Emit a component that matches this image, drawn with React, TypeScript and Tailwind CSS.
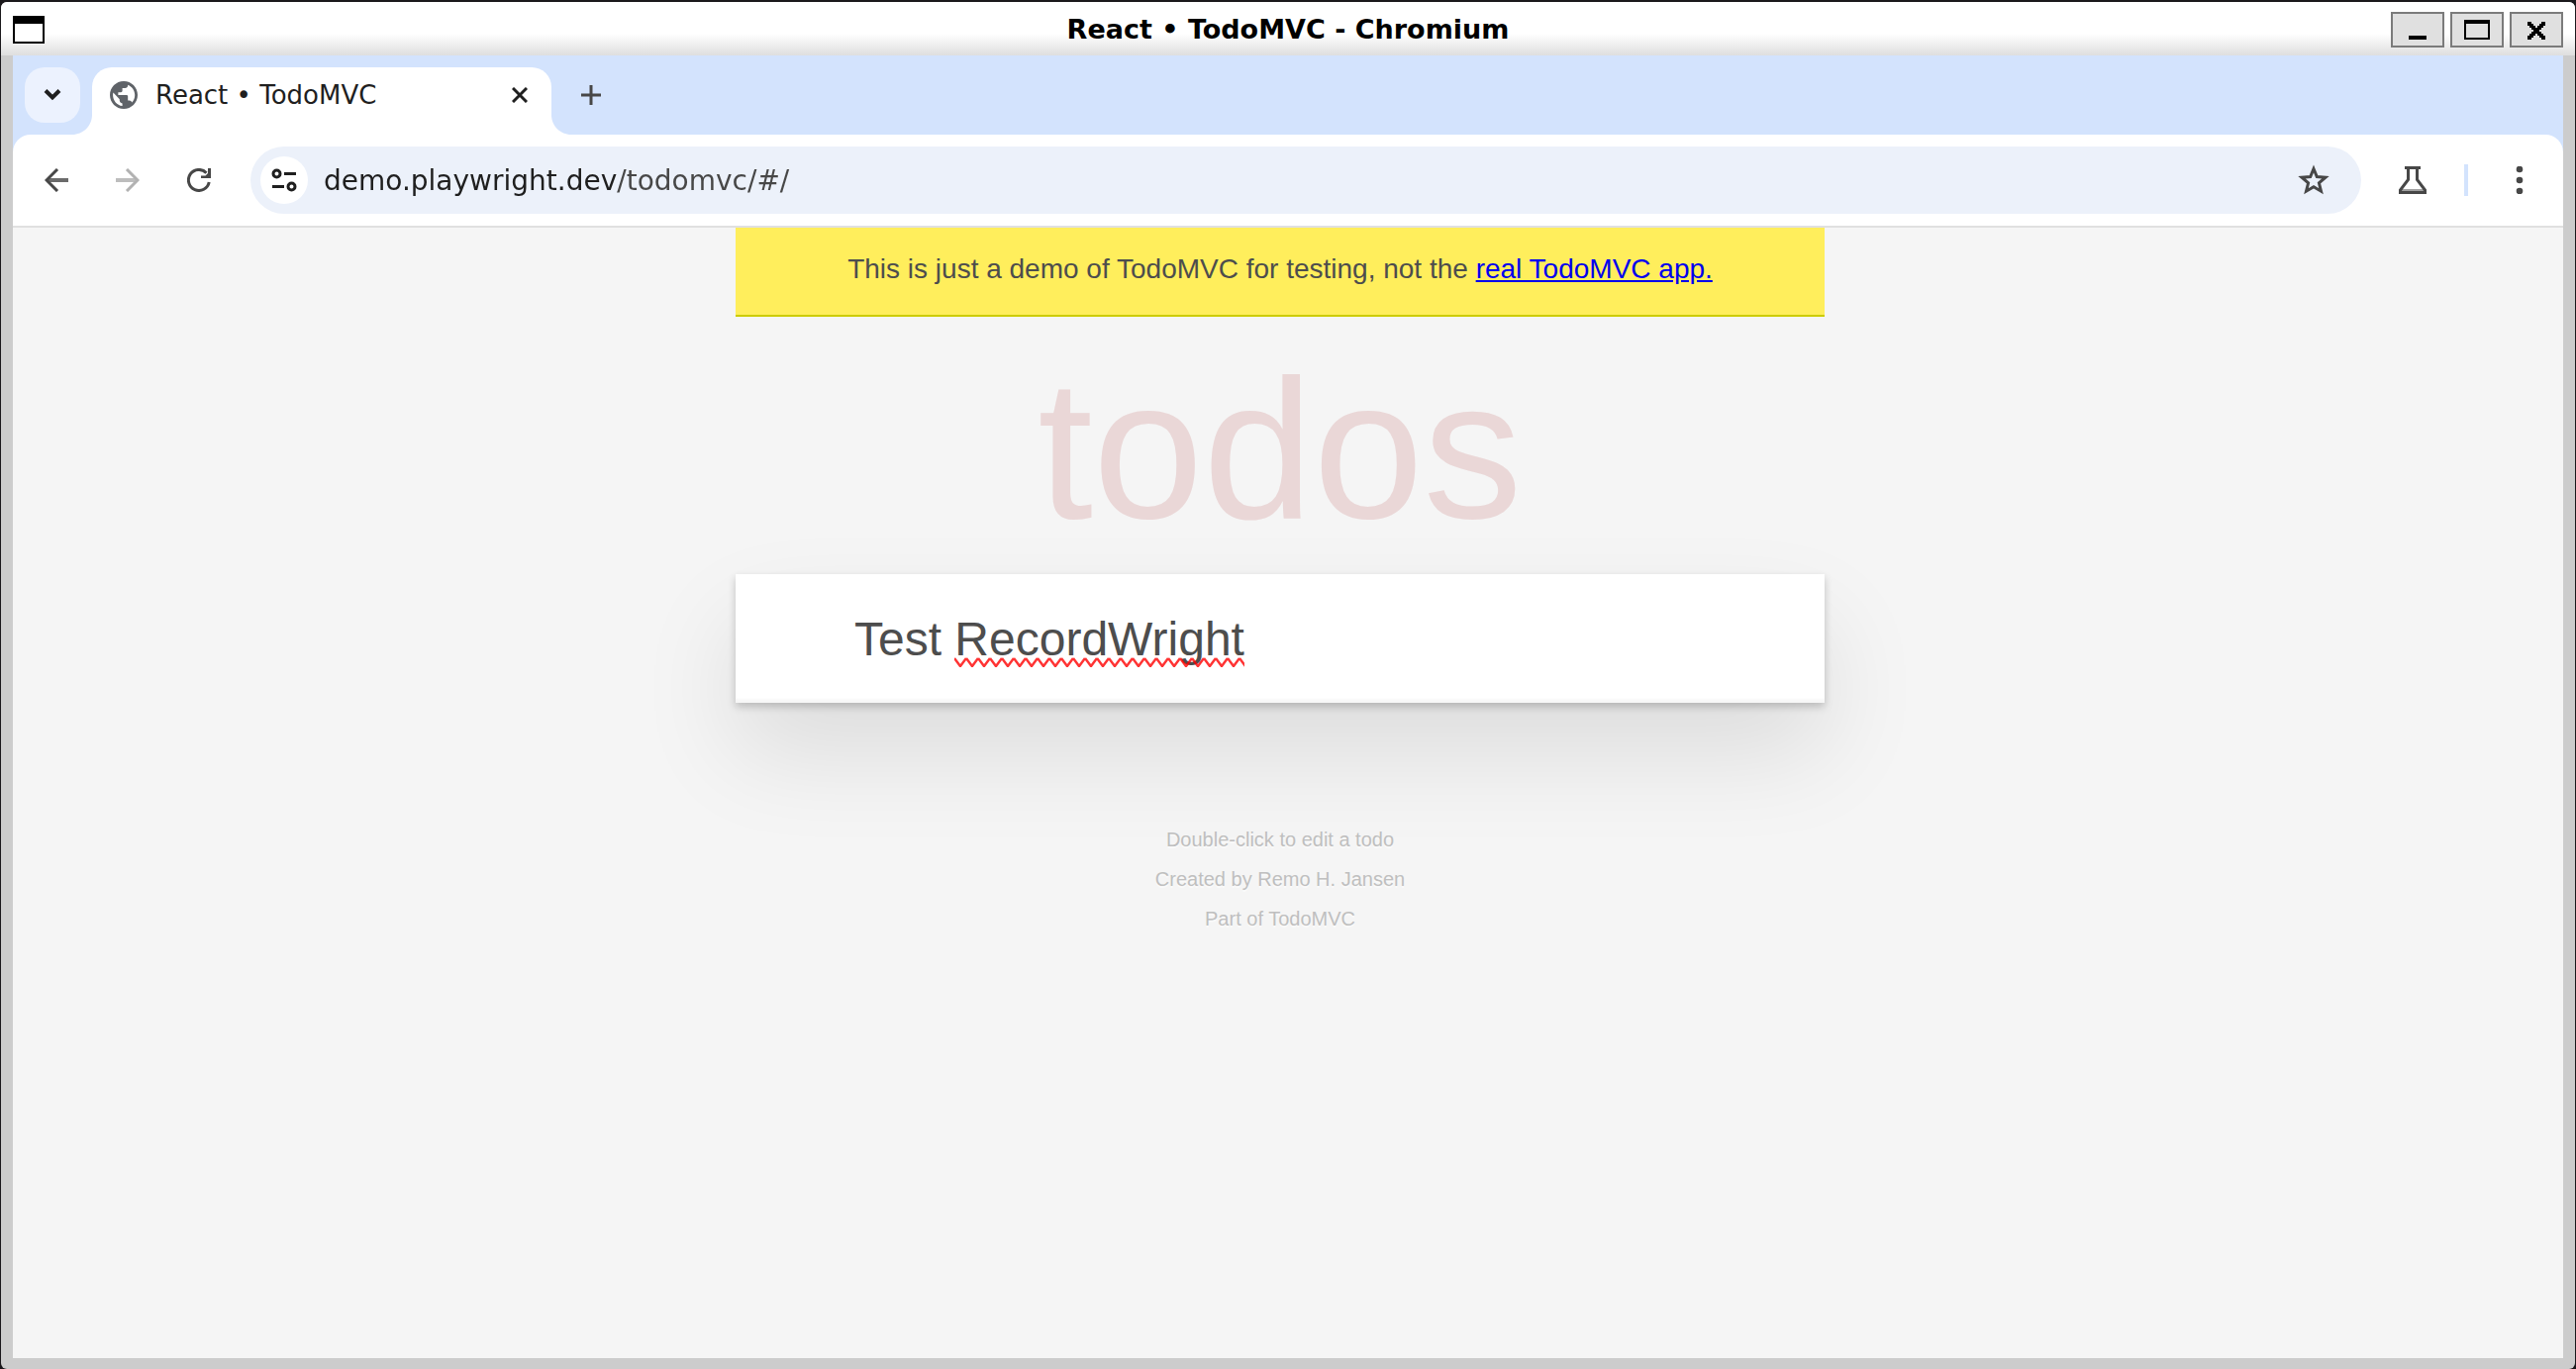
import React from "react";

function TitleBar() {
  return (
    <header className="flex h-[54px] items-center bg-linear-to-b from-white from-60% to-[#dedede] px-3 pt-0.5">
      <div className="flex flex-1">
        <button
          aria-label="Window menu"
          className="h-7 w-8 border-2 border-t-8 border-black bg-white"
        />
      </div>
      <h1 className="font-['DejaVu_Sans',sans-serif] text-[27px] leading-[52px] font-bold text-black">
        React • TodoMVC - Chromium
      </h1>
      <div className="flex flex-1 justify-end gap-1.5">
        <WindowButton label="Minimize">
          <path d="M16 22h18v4H16z" />
        </WindowButton>
        <WindowButton label="Maximize">
          <path fillRule="evenodd" d="M12 6h26v20H12zM14 10v14h22V10z" />
        </WindowButton>
        <WindowButton label="Close">
          <path d="M16 8h4v2h2v2h2v2h2v-2h2v-2h2V8h4v4h-2v2h-2v2h-2v2h2v2h2v2h2v4h-4v-2h-2v-2h-2v-2h-2v2h-2v2h-2v2h-4v-4h2v-2h2v-2h2v-2h-2v-2h-2v-2h-2z" />
        </WindowButton>
      </div>
    </header>
  );
}

function WindowButton({ label, children }: { label: string; children: React.ReactNode }) {
  return (
    <button aria-label={label} className="h-9 w-[54px] border-2 border-[#7b7b7b] bg-[#e0e0e0]">
      <svg viewBox="0 0 50 32" className="h-8 w-[50px]">
        {children}
      </svg>
    </button>
  );
}

function TabStrip() {
  return (
    <div className="flex h-20 items-end bg-[#d3e3fd]">
      <button
        aria-label="Search tabs"
        className="mb-3 ml-3 flex size-14 items-center justify-center rounded-[20px] bg-[#ecf2fe]"
      >
        <svg viewBox="0 0 20 20" className="size-5" fill="none" stroke="#1f1f1f" strokeWidth="4">
          <path d="M3 5.500 10 12.500 17 5.500" />
        </svg>
      </button>
      {/* The foot curves out of the tab and slips under the rounded search button. */}
      <svg viewBox="0 0 20 20" className="-ml-2 size-5" fill="#fff">
        <path d="M20 0v20H0C11 20 20 11 20 0z" />
      </svg>
      <div className="flex h-[68px] w-[464px] items-center rounded-t-[20px] bg-white pr-6 pl-[18px]">
        <svg viewBox="2 2 20 20" className="mb-3 size-7 shrink-0" fill="#5f6368">
          <path d="M12 2C6.480 2 2 6.480 2 12s4.480 10 10 10 10-4.480 10-10S17.520 2 12 2zM4.200 12c0-.610.080-1.210.210-1.780L8.990 15v1c0 1.100.900 2 2 2v1.930C7.060 19.430 4.200 16.070 4.200 12zm13.690 5.400c-.260-.810-1-1.400-1.900-1.400h-1v-3c0-.550-.450-1-1-1h-6v-2h2c.550 0 1-.450 1-1V7h2c1.100 0 2-.900 2-2v-.410C17.920 5.770 20 8.650 20 12c0 2.080-.810 3.980-2.110 5.400z" />
        </svg>
        <span className="mb-3 ml-[18px] flex-1 font-['DejaVu_Sans',sans-serif] text-[26px] leading-8 whitespace-nowrap text-[#1f1f1f]">
          React • TodoMVC
        </span>
        <button aria-label="Close tab" className="mb-3">
          <svg viewBox="0 0 16 16" className="size-4" fill="none" stroke="#1f1f1f" strokeWidth="3">
            <path d="M1 1l14 14M15 1 1 15" />
          </svg>
        </button>
      </div>
      <svg viewBox="0 0 20 20" className="size-5" fill="#fff">
        <path d="M0 0v20h20C9 20 0 11 0 0z" />
      </svg>
      <button aria-label="New tab" className="mb-[30px] ml-2.5">
        <svg viewBox="0 0 20 20" className="size-5" fill="none" stroke="#474747" strokeWidth="3">
          <path d="M10 0v20M0 10h20" />
        </svg>
      </button>
    </div>
  );
}

function Toolbar() {
  return (
    <div className="bg-[#d3e3fd]">
      <div className="flex h-[94px] items-center rounded-t-[18px] border-b-2 border-[#e0e0e0] bg-white pr-10 pl-8">
        <button aria-label="Back">
          <svg viewBox="0 0 24 24" className="size-6" fill="none" strokeWidth="3">
            <path d="M24 12H3" stroke="#6b6b6b" strokeWidth="4" />
            <path d="M13 1 2 12l11 11" stroke="#474747" />
          </svg>
        </button>
        <button aria-label="Forward" className="ml-12">
          <svg viewBox="0 0 24 24" className="size-6" fill="none" strokeWidth="3">
            <path d="M0 12h21" stroke="#bdbdbd" strokeWidth="4" />
            <path d="M11 1l11 11-11 11" stroke="#b2b2b2" />
          </svg>
        </button>
        <button aria-label="Reload" className="ml-12">
          <svg viewBox="0 0 24 24" className="size-6" fill="none" stroke="#474747" strokeWidth="3">
            <path d="M22.200 14A10.500 10.500 0 1 1 19.500 4.700" />
            <path d="M24 0v10H14V7.500h4.500L21 5V0z" fill="#474747" stroke="none" />
          </svg>
        </button>
        <div className="ml-10 flex h-[68px] flex-1 items-center rounded-full bg-[#ecf1fa] pr-8 pl-2.5">
          <button
            aria-label="View site information"
            className="flex size-12 items-center justify-center rounded-full bg-white"
          >
            <svg viewBox="0 0 26 28" className="h-7 w-[26px]" fill="none" stroke="#1f1f1f" strokeWidth="3">
              <circle cx="5.500" cy="7.500" r="3.500" />
              <path d="M13 7.500h12M1 20.500h12" />
              <circle cx="20.500" cy="20.500" r="3.500" />
            </svg>
          </button>
          <input
            aria-label="Address"
            defaultValue="demo.playwright.dev/todomvc/#/"
            spellCheck={false}
            className="ml-4 h-12 min-w-0 flex-1 bg-linear-to-r from-[#1f1f1f] from-[297px] to-[#474747] to-[297px] bg-clip-text font-['DejaVu_Sans',sans-serif] text-[28px] text-transparent outline-none"
          />
          <button aria-label="Bookmark this tab">
            <svg viewBox="0 0 32 32" className="size-8" fill="none" stroke="#474747" strokeWidth="3">
              <path d="M16 4.500l3.300 8 8.700.700-6.600 5.600 2.100 8.400-7.500-4.500-7.500 4.500 2.100-8.400L4 13.200l8.700-.700z" />
            </svg>
          </button>
        </div>
        <button aria-label="Labs" className="ml-[38px]">
          <svg viewBox="0 0 28 28" className="size-7" fill="none" stroke="#474747" strokeWidth="3">
            <path d="M3 24.500h22" stroke="#a0a0a0" />
            <path d="M6 1.500h16M9.500 1.500v12L1.500 24v2.500h25V24l-8-10.500v-12" />
          </svg>
        </button>
        <div className="ml-[38px] h-8 w-1 bg-[#d3e3fd]" />
        <button aria-label="Menu" className="ml-12">
          <svg viewBox="0 0 8 28" className="h-7 w-2" fill="#474747">
            <circle cx="4" cy="3" r="3.300" />
            <circle cx="4" cy="14" r="3.300" />
            <circle cx="4" cy="25" r="3.300" />
          </svg>
        </button>
      </div>
    </div>
  );
}

function TodoPage() {
  return (
    <main className="flex-1 bg-[#f5f5f5] pr-4 font-['Liberation_Sans',sans-serif] text-[#4d4d4d]">
      <div className="mx-auto max-w-[1100px]">
        <p className="border-b-2 border-[#cccc00] bg-[#ffee5c] pt-[18px] pb-[22px] text-center text-[28px] leading-[48px]">
          This is just a demo of TodoMVC for testing, not the{" "}
          <a href="https://todomvc.com/" className="text-[#0000ee] underline">
            real TodoMVC app.
          </a>
        </p>
        <h2 className="pt-6 text-center text-[200px] leading-[220px] text-[#ead7d7]">todos</h2>
        <div className="relative mt-4 shadow-[0_4px_8px_rgba(0,0,0,0.2),0_50px_100px_rgba(0,0,0,0.1)]">
          <input
            aria-label="What needs to be done?"
            defaultValue="Test RecordWright"
            spellCheck={false}
            className="h-[130px] w-full bg-white pl-[120px] text-[48px] shadow-[inset_0_-4px_2px_rgba(0,0,0,0.03)] outline-none"
          />
          <svg className="pointer-events-none absolute top-[84px] left-[221px] h-2.5 w-[293px]">
            <defs>
              <pattern id="spelling-wave" width="12" height="10" patternUnits="userSpaceOnUse">
                <path d="M0 1 6 9 12 1" fill="none" stroke="#ff0000" strokeOpacity="0.8" strokeWidth="2.500" />
              </pattern>
            </defs>
            <rect width="100%" height="100%" fill="url(#spelling-wave)" />
          </svg>
        </div>
        <footer className="pt-[118px] text-center text-xl leading-10 text-[#bfbfbf] text-shadow-[0_2px_0_rgba(255,255,255,0.5)]">
          <p>Double-click to edit a todo</p>
          <p>Created by Remo H. Jansen</p>
          <p>Part of TodoMVC</p>
        </footer>
      </div>
    </main>
  );
}

export default function App() {
  return (
    <div className="flex min-h-screen flex-col bg-[#1b191c] px-px pt-0.5">
      <div className="flex flex-1 flex-col overflow-hidden rounded-md bg-[#cccccc]">
        <TitleBar />
        <div className="mx-3 mb-[11px] flex flex-1 flex-col">
          <TabStrip />
          <Toolbar />
          <TodoPage />
        </div>
      </div>
    </div>
  );
}
